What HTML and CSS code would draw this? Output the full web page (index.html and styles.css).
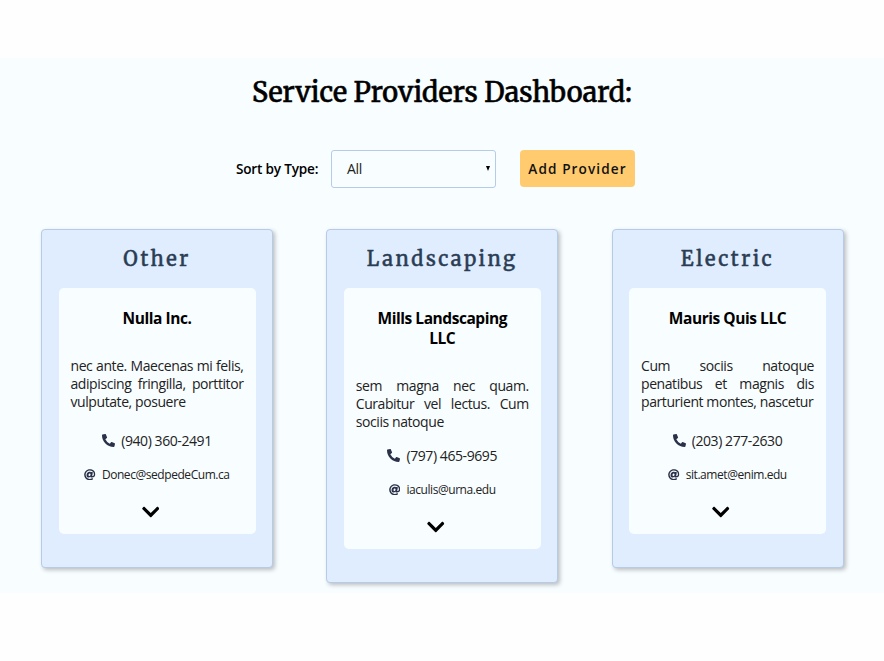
FILE: index.html
```
<!DOCTYPE html>
<html lang="en">
<head>
<meta charset="utf-8">
<title>Service Providers Dashboard</title>
<link rel="stylesheet" href="styles.css">
</head>
<body>
<svg class="sprite" aria-hidden="true">
  <symbol id="phone" viewBox="0 0 512 512"><path d="M497.39 361.8l-112-48a24 24 0 0 0-28 6.9l-49.6 60.6A370.66 370.66 0 0 1 130.6 204.11l60.6-49.6a23.94 23.94 0 0 0 6.9-28l-48-112A24.16 24.16 0 0 0 122.6.61l-104 24A24 24 0 0 0 0 48c0 256.5 207.9 464 464 464a24 24 0 0 0 23.4-18.6l24-104a24.29 24.29 0 0 0-14.01-27.6z"/></symbol>
  <symbol id="at" viewBox="0 0 512 512"><path d="M256 8C118.941 8 8 118.919 8 256c0 137.059 110.919 248 248 248 48.154 0 95.342-14.14 135.408-40.223 12.005-7.815 14.625-24.288 5.552-35.372l-10.177-12.433c-7.671-9.371-21.179-11.667-31.373-5.129C325.92 429.757 291.314 440 256 440c-101.458 0-184-82.542-184-184S154.542 72 256 72c100.139 0 184 57.619 184 160 0 38.786-21.093 79.742-58.17 83.693-17.349-.454-16.91-12.857-13.476-30.024l23.433-121.11C394.653 149.75 383.308 136 368.225 136h-44.981a13.518 13.518 0 0 0-13.432 11.993l-.01.092c-14.697-17.901-40.448-21.775-59.971-21.775-74.58 0-137.831 62.234-137.831 151.46 0 65.303 36.785 105.87 96 105.87 26.984 0 57.369-15.637 74.991-38.333 9.522 34.104 40.613 34.103 70.71 34.103C462.609 379.41 504 307.798 504 232 504 95.653 394.023 8 256 8zm-21.68 304.43c-22.249 0-36.07-15.623-36.07-40.771 0-44.993 30.779-72.729 58.63-72.729 22.292 0 35.601 15.241 35.601 40.77 0 45.061-33.875 72.73-58.161 72.73z"/></symbol>
  <symbol id="chevron" viewBox="0 0 448 512"><path d="M207.029 381.476L12.686 187.132c-9.373-9.373-9.373-24.569 0-33.941l22.667-22.667c9.357-9.357 24.522-9.375 33.901-.04L224 284.505l154.745-154.021c9.379-9.335 24.544-9.317 33.901.04l22.667 22.667c9.373 9.373 9.373 24.569 0 33.941L240.971 381.476c-9.373 9.372-24.569 9.372-33.942 0z"/></symbol>
</svg>
<main class="dashboard">
  <h1 class="title">Service Providers Dashboard:</h1>
  <div class="toolbar">
    <span class="sort-label">Sort by Type:</span>
    <div class="select"><span>All</span><i class="arrow"></i></div>
    <button class="add">Add Provider</button>
  </div>
  <div class="columns">
    <section class="column">
      <h2 class="type">Other</h2>
      <article class="card">
        <h3 class="name">Nulla Inc.</h3>
        <p class="about">nec ante. Maecenas mi felis, adipiscing fringilla, porttitor vulputate, posuere</p>
        <div class="phone"><svg><use href="#phone"/></svg><span>(940) 360-2491</span></div>
        <div class="email"><svg><use href="#at"/></svg><span>Donec@sedpedeCum.ca</span></div>
        <svg class="more"><use href="#chevron"/></svg>
      </article>
    </section>
    <section class="column">
      <h2 class="type">Landscaping</h2>
      <article class="card card-tall">
        <h3 class="name">Mills Landscaping LLC</h3>
        <p class="about">sem magna nec quam. Curabitur vel lectus. Cum sociis natoque</p>
        <div class="phone"><svg><use href="#phone"/></svg><span>(797) 465-9695</span></div>
        <div class="email"><svg><use href="#at"/></svg><span>iaculis@urna.edu</span></div>
        <svg class="more"><use href="#chevron"/></svg>
      </article>
    </section>
    <section class="column">
      <h2 class="type">Electric</h2>
      <article class="card">
        <h3 class="name">Mauris Quis LLC</h3>
        <p class="about">Cum sociis natoque penatibus et magnis dis parturient montes, nascetur</p>
        <div class="phone"><svg><use href="#phone"/></svg><span>(203) 277-2630</span></div>
        <div class="email"><svg><use href="#at"/></svg><span>sit.amet@enim.edu</span></div>
        <svg class="more"><use href="#chevron"/></svg>
      </article>
    </section>
  </div>
</main>
</body>
</html>
```
FILE: styles.css
```
* { box-sizing: border-box; }
body { margin: 0; padding-top: 58px; height: 661px; overflow: hidden; background: #fefefe; font-family: "Open Sans", sans-serif; color: #000; }
.sprite { display: none; }
.dashboard { height: 535px; background: #f8fdff; }
.title { margin: 0; padding-top: 14px; height: 92px; text-align: center; white-space: nowrap; font: 400 27px/40px Merriweather, "DejaVu Serif Condensed", "DejaVu Serif", serif; letter-spacing: 0.04px; -webkit-text-stroke: 0.6px #000; }
.toolbar { display: flex; align-items: center; height: 37px; margin-left: 236px; }
.sort-label { width: 95px; font-size: 13.6px; letter-spacing: -0.2px; font-weight: 600; white-space: nowrap; }
.select { display: flex; align-items: center; justify-content: space-between; width: 164.5px; height: 38px; margin-right: 24.5px; padding: 0 5px 0 15px; border: 1px solid #b5cbe8; border-radius: 3px; font-size: 14px; letter-spacing: -0.3px; color: #222; }
.arrow { border: 2.5px solid transparent; border-top: 5px solid #000; border-bottom: 0; }
.add { width: 115px; height: 37.5px; padding: 0; border: 0; border-radius: 4px; background: #ffcb6e; font: 600 13.6px "Open Sans", sans-serif; letter-spacing: 1.1px; white-space: nowrap; color: #111; }
.columns { display: flex; align-items: flex-start; justify-content: space-between; margin: 41.5px 40.5px 0 41px; }
.column { width: 232px; padding: 0 16.5px 33px; border: 1px solid #b5cbe8; border-radius: 4px; background: #e0edff; box-shadow: 2px 2px 4px rgba(0, 0, 0, .25); }
.type { margin: 0; height: 58px; padding-top: 14px; text-align: center; white-space: nowrap; font: 400 20px/30px Merriweather, "DejaVu Serif Condensed", "DejaVu Serif", serif; letter-spacing: 2.5px; color: #2a3d54; -webkit-text-stroke: 0.5px #2a3d54; }
.card { display: flex; flex-direction: column; align-items: center; height: 246px; padding: 20px 12px 0; border-radius: 5px; background: #f8fdff; }
.card-tall { height: 261px; }
.name { margin: 0 0 29px; width: 150px; text-align: center; font-size: 15.5px; letter-spacing: -0.45px; line-height: 20px; font-weight: 700; }
.about { margin: 0 0 21px; width: 173px; font-size: 14px; letter-spacing: -0.42px; line-height: 18px; text-align: justify; color: #222; }
.card-tall .about { margin-bottom: 16px; }
.phone, .email { display: flex; align-items: center; color: #222; white-space: nowrap; }
.phone svg, .email svg { fill: #2b3148; }
.phone { gap: 6px; height: 18px; font-size: 14px; letter-spacing: -0.42px; }
.phone svg { width: 13px; height: 13px; }
.email { gap: 6px; height: 16px; margin-top: 17px; font-size: 12px; letter-spacing: -0.44px; }
.email svg { width: 11.5px; height: 11.5px; }
.more { width: 17.5px; height: 20px; margin: 19.5px 13px 0 0; flex: none; }
```
